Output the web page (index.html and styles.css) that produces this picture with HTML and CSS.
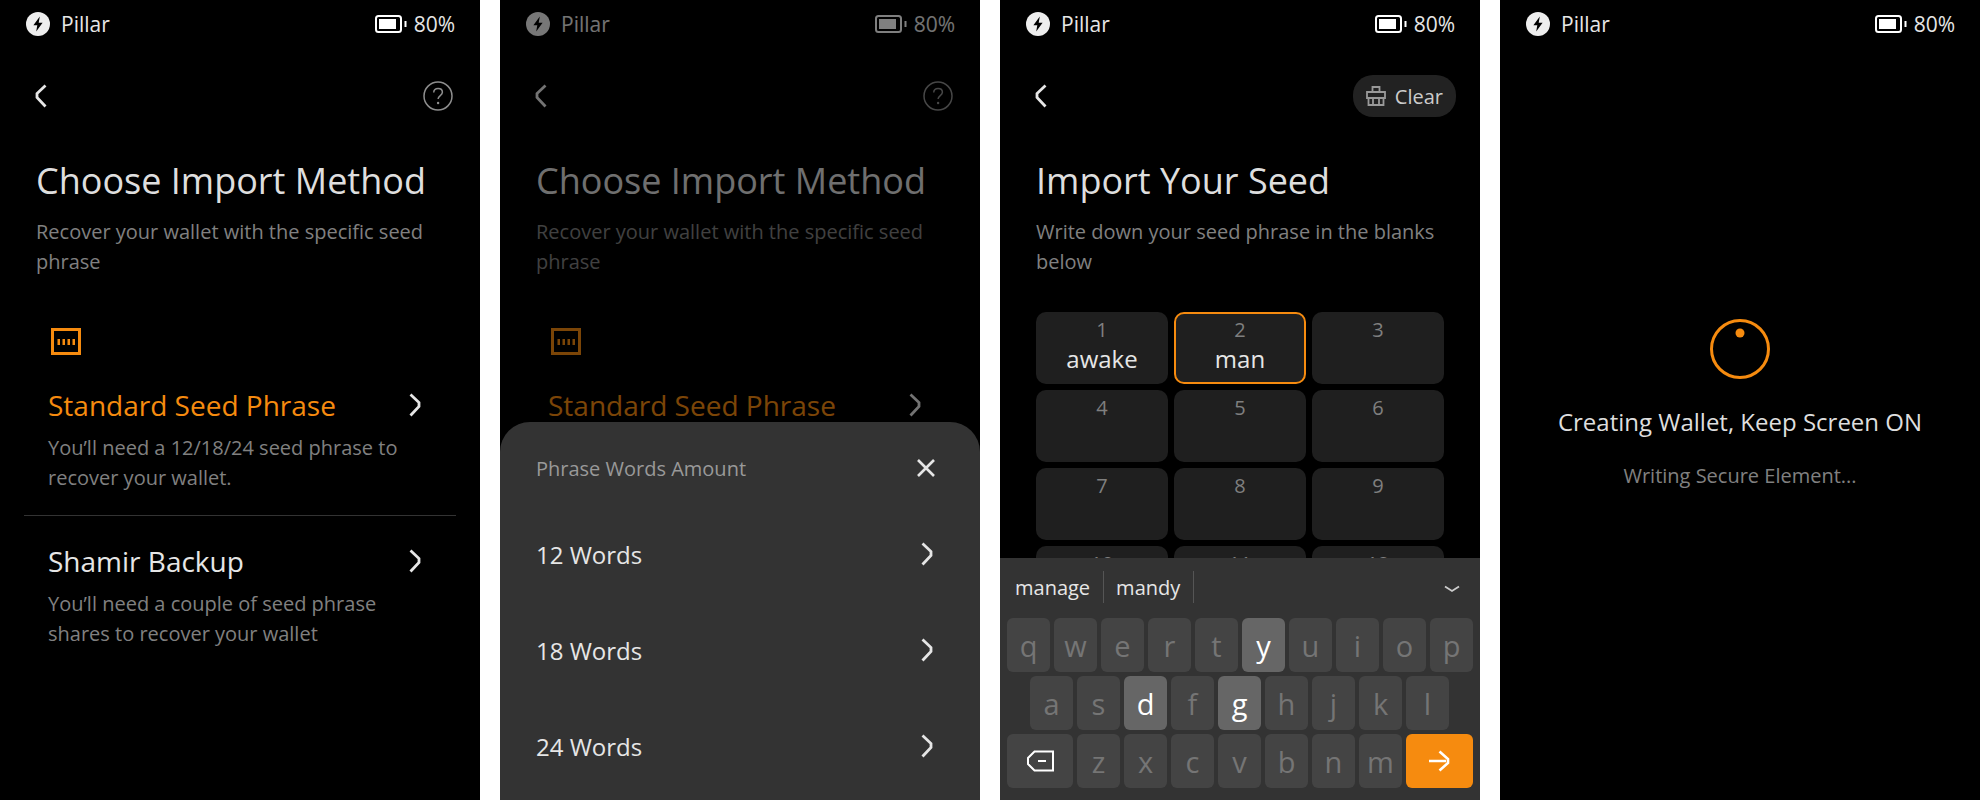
FILE: index.html
```html
<!DOCTYPE html>
<html lang="en">
  <head>
    <meta name="viewport" content="width=device-width, initial-scale=1.0">
    <meta charset="utf-8">
    <title>Pillar wallet import</title>
    <link rel="stylesheet" href="styles.css">
  </head>
  <body>
    <svg class="sprite" width="0" height="0">
      <symbol id="bolt" viewBox="0 0 24 24">
        <circle cx="12" cy="12" r="12" fill="#eee"/>
        <path d="M13.8 4.600 7.400 13.200h3.900l-1.100 6.200 6.400-8.600h-3.900z" fill="#000"/>
      </symbol>
      <symbol id="battery" viewBox="0 0 32 18">
        <rect x="1" y="1" width="25" height="16" rx="2.500" fill="none" stroke="currentColor" stroke-width="2"/>
        <rect x="4" y="4" width="17" height="10" fill="currentColor"/>
        <rect x="29.500" y="6" width="2" height="6" fill="currentColor"/>
      </symbol>
      <symbol id="back" viewBox="0 0 12 24">
        <path d="M10.500 1.500 2 9.500v4l8.500 9" fill="none" stroke="currentColor" stroke-width="2.800"/>
      </symbol>
      <symbol id="next" viewBox="0 0 12 24">
        <path d="M1.500 1.500 10 9.500v4l-8.500 9" fill="none" stroke="currentColor" stroke-width="2.800"/>
      </symbol>
    </svg>

    <main class="page">
      <!-- choose method -->
      <section class="screen">
        <div class="status">
          <div class="status-app"><svg class="logo"><use href="#bolt"/></svg>Pillar</div>
          <div class="status-battery"><svg class="battery"><use href="#battery"/></svg>80%</div>
        </div>
        <div class="nav">
          <svg class="back"><use href="#back"/></svg>
          <svg class="help" viewBox="0 0 30 30">
            <circle cx="15" cy="15" r="14" fill="none" stroke="currentColor" stroke-width="1.500"/>
            <path d="M10.700 11.500c.2-2.500 2-3.900 4.400-3.900 2.500 0 4.300 1.500 4.300 3.700 0 3.300-4.300 3.300-4.300 6.700" fill="none" stroke="currentColor" stroke-width="1.500"/>
            <circle cx="15.100" cy="22" r="1.200" fill="currentColor"/>
          </svg>
        </div>
        <div class="intro">
          <h1 class="title">Choose Import Method</h1>
          <p class="subtitle">Recover your wallet with the specific seed phrase</p>
        </div>
        <div class="methods">
          <div class="method method-first">
            <svg class="seed-icon" viewBox="0 0 30 27">
              <rect x="1.500" y="1.500" width="27" height="24" fill="none" stroke="currentColor" stroke-width="3"/>
              <path d="M6.500 11H9v6H6.500zm5 0H14v6h-2.500zm5 0H19v6h-2.500zm5 0H24v6h-2.500z" fill="currentColor"/>
            </svg>
            <div class="method-head method-active"><span>Standard Seed Phrase</span><svg class="next"><use href="#next"/></svg></div>
            <p class="method-desc">You’ll need a 12/18/24 seed phrase to recover your wallet.</p>
          </div>
          <div class="method">
            <div class="method-head"><span>Shamir Backup</span><svg class="next"><use href="#next"/></svg></div>
            <p class="method-desc">You’ll need a couple of seed phrase shares to recover your wallet</p>
          </div>
        </div>
      </section>

      <!-- words amount sheet -->
      <section class="screen">
        <div class="status">
          <div class="status-app"><svg class="logo"><use href="#bolt"/></svg>Pillar</div>
          <div class="status-battery"><svg class="battery"><use href="#battery"/></svg>80%</div>
        </div>
        <div class="nav">
          <svg class="back"><use href="#back"/></svg>
          <svg class="help" viewBox="0 0 30 30">
            <circle cx="15" cy="15" r="14" fill="none" stroke="currentColor" stroke-width="1.500"/>
            <path d="M10.700 11.500c.2-2.500 2-3.900 4.400-3.900 2.500 0 4.300 1.500 4.300 3.700 0 3.300-4.300 3.300-4.300 6.700" fill="none" stroke="currentColor" stroke-width="1.500"/>
            <circle cx="15.100" cy="22" r="1.200" fill="currentColor"/>
          </svg>
        </div>
        <div class="intro">
          <h1 class="title">Choose Import Method</h1>
          <p class="subtitle">Recover your wallet with the specific seed phrase</p>
        </div>
        <div class="methods">
          <div class="method method-first">
            <svg class="seed-icon" viewBox="0 0 30 27">
              <rect x="1.500" y="1.500" width="27" height="24" fill="none" stroke="currentColor" stroke-width="3"/>
              <path d="M6.500 11H9v6H6.500zm5 0H14v6h-2.500zm5 0H19v6h-2.500zm5 0H24v6h-2.500z" fill="currentColor"/>
            </svg>
            <div class="method-head method-active"><span>Standard Seed Phrase</span><svg class="next"><use href="#next"/></svg></div>
          </div>
        </div>
        <div class="dim"></div>
        <div class="sheet">
          <div class="sheet-head">
            <span>Phrase Words Amount</span>
            <svg class="close" viewBox="0 0 18 18"><path d="M1 1l16 16M17 1 1 17" fill="none" stroke="currentColor" stroke-width="2.600"/></svg>
          </div>
          <div class="sheet-row"><span>12 Words</span><svg class="next"><use href="#next"/></svg></div>
          <div class="sheet-row"><span>18 Words</span><svg class="next"><use href="#next"/></svg></div>
          <div class="sheet-row"><span>24 Words</span><svg class="next"><use href="#next"/></svg></div>
        </div>
      </section>

      <!-- seed entry -->
      <section class="screen">
        <div class="status">
          <div class="status-app"><svg class="logo"><use href="#bolt"/></svg>Pillar</div>
          <div class="status-battery"><svg class="battery"><use href="#battery"/></svg>80%</div>
        </div>
        <div class="nav">
          <svg class="back"><use href="#back"/></svg>
          <div class="clear">
            <svg class="clear-icon" viewBox="0 0 20 20">
              <path d="M1 6h18v6H1zM2.500 12v7h15v-7M6.500 6V1h7v5M7 12v7M13 12v7" fill="none" stroke="currentColor" stroke-width="1.800"/>
            </svg>
            Clear
          </div>
        </div>
        <div class="intro">
          <h1 class="title">Import Your Seed</h1>
          <p class="subtitle">Write down your seed phrase in the blanks below</p>
        </div>
        <div class="words">
          <div class="word"><span class="word-num">1</span><span class="word-text">awake</span></div>
          <div class="word word-active"><span class="word-num">2</span><span class="word-text">man</span></div>
          <div class="word"><span class="word-num">3</span></div>
          <div class="word"><span class="word-num">4</span></div>
          <div class="word"><span class="word-num">5</span></div>
          <div class="word"><span class="word-num">6</span></div>
          <div class="word"><span class="word-num">7</span></div>
          <div class="word"><span class="word-num">8</span></div>
          <div class="word"><span class="word-num">9</span></div>
          <div class="word"><span class="word-num">10</span></div>
          <div class="word"><span class="word-num">11</span></div>
          <div class="word"><span class="word-num">12</span></div>
        </div>
        <div class="keyboard">
          <div class="candidates">
            <span class="candidate">manage</span>
            <span class="candidate">mandy</span>
            <svg class="candidates-more" viewBox="0 0 16 8"><path d="M1 1.500 8 6l7-4.500" fill="none" stroke="currentColor" stroke-width="1.800"/></svg>
          </div>
          <div class="keys">
            <div class="key">q</div><div class="key">w</div><div class="key">e</div><div class="key">r</div><div class="key">t</div><div class="key key-on">y</div><div class="key">u</div><div class="key">i</div><div class="key">o</div><div class="key">p</div>
          </div>
          <div class="keys keys-mid">
            <div class="key">a</div><div class="key">s</div><div class="key key-on">d</div><div class="key">f</div><div class="key key-on">g</div><div class="key">h</div><div class="key">j</div><div class="key">k</div><div class="key">l</div>
          </div>
          <div class="keys">
            <div class="key key-wide">
              <svg class="del-icon" viewBox="0 0 28 22"><path d="M27 1.500v19H8.500L2 14V8l6.500-6.500zM12 11h8" fill="none" stroke="currentColor" stroke-width="2"/></svg>
            </div>
            <div class="key">z</div><div class="key">x</div><div class="key">c</div><div class="key">v</div><div class="key">b</div><div class="key">n</div><div class="key">m</div>
            <div class="key key-wide key-go">
              <svg class="go-icon" viewBox="0 0 21 22"><path d="M0 11h17M10.500 1.500 19 9v4l-8.500 7.500" fill="none" stroke="currentColor" stroke-width="2.600"/></svg>
            </div>
          </div>
        </div>
      </section>

      <!-- creating wallet -->
      <section class="screen">
        <div class="status">
          <div class="status-app"><svg class="logo"><use href="#bolt"/></svg>Pillar</div>
          <div class="status-battery"><svg class="battery"><use href="#battery"/></svg>80%</div>
        </div>
        <div class="progress">
          <svg class="spinner" viewBox="0 0 60 60">
            <circle cx="30" cy="30" r="28.500" fill="none" stroke="currentColor" stroke-width="3"/>
            <circle cx="30" cy="14" r="4.500" fill="currentColor"/>
          </svg>
          <div class="progress-title">Creating Wallet, Keep Screen ON</div>
          <div class="progress-sub">Writing Secure Element...</div>
        </div>
      </section>
    </main>
  </body>
</html>
```

FILE: styles.css
```css
*, *::before, *::after {
  box-sizing: border-box;
}

html, body {
  margin: 0;
  padding: 0;
  background: #fff;
  font-family: "Open Sans", "Noto Sans", sans-serif;
}

h1, p {
  margin: 0;
  padding: 0;
}

.sprite {
  position: absolute;
}

.page {
  display: flex;
  gap: 20px;
  width: 1980px;
  height: 800px;
  overflow: hidden;
}

.screen {
  position: relative;
  flex: 0 0 480px;
  height: 800px;
  background: #000;
  color: #e6e6e6;
  overflow: hidden;
}

/* status bar */
.status {
  display: flex;
  align-items: center;
  justify-content: space-between;
  height: 48px;
  padding: 0 25px 0 26px;
  font-size: 21px;
}

.status-app, .status-battery {
  display: flex;
  align-items: center;
}

.status-app {
  font-weight: 500;
}

.logo {
  width: 24px;
  height: 24px;
  margin-right: 11px;
}

.battery {
  width: 32px;
  height: 18px;
  margin-right: 7px;
  color: #fff;
}

/* nav row */
.nav {
  display: flex;
  align-items: center;
  justify-content: space-between;
  height: 42px;
  margin-top: 27px;
  padding: 0 24px 0 35px;
}

.back {
  width: 12px;
  height: 24px;
  color: #e6e6e6;
}

.help {
  width: 30px;
  height: 30px;
  margin-right: 3px;
  color: #8e8e8e;
}

.clear {
  display: flex;
  align-items: center;
  height: 42px;
  padding: 0 13px;
  border-radius: 20px;
  background: #222;
  color: #ccc;
  font-size: 20px;
}

.clear-icon {
  width: 20px;
  height: 20px;
  margin-right: 9px;
  color: #999;
}

/* heading block */
.intro {
  margin-top: 40px;
  padding: 0 36px;
}

.title {
  font-size: 36px;
  line-height: 48px;
  font-weight: 400;
  color: #dedede;
}

.subtitle {
  margin-top: 12px;
  font-size: 20px;
  line-height: 30px;
  color: #808080;
}

/* method list */
.methods {
  margin: 51px 24px 0;
}

.method {
  padding: 25px 24px 0;
}

.method-first {
  padding-top: 0;
  padding-bottom: 22px;
  border-bottom: 1px solid #333;
}

.seed-icon {
  display: block;
  width: 30px;
  height: 27px;
  margin: 0 0 30px 3px;
  color: #f68b0f;
}

.method-head {
  display: flex;
  align-items: center;
  justify-content: space-between;
  height: 40px;
  padding-right: 11px;
  font-size: 28px;
  color: #e6e6e6;
}

.method-active {
  color: #f68b0f;
}

.next {
  width: 12px;
  height: 24px;
  color: #e6e6e6;
}

.method-desc {
  margin-top: 8px;
  font-size: 20px;
  line-height: 30px;
  color: #808080;
}

/* bottom sheet */
.dim {
  position: absolute;
  inset: 0;
  background: rgba(0, 0, 0, 0.5);
}

.sheet {
  position: absolute;
  left: 0;
  right: 0;
  top: 422px;
  bottom: 0;
  padding: 0 36px;
  border-radius: 30px 30px 0 0;
  background: #333;
}

.sheet-head {
  display: flex;
  align-items: center;
  justify-content: space-between;
  height: 62px;
  padding-top: 30px;
  margin-bottom: 22px;
  font-size: 20px;
  color: #999;
}

.close {
  width: 18px;
  height: 18px;
  margin-right: 9px;
  color: #e6e6e6;
}

.sheet-row {
  display: flex;
  align-items: center;
  justify-content: space-between;
  height: 96px;
  padding-right: 11px;
  font-size: 24px;
  color: #e6e6e6;
}

/* seed words grid */
.words {
  display: grid;
  grid-template-columns: repeat(3, 132px);
  grid-auto-rows: 72px;
  gap: 6px;
  margin: 35px 0 0 36px;
}

.word {
  display: flex;
  flex-direction: column;
  align-items: center;
  padding-top: 6px;
  border-radius: 10px;
  background: #1f1f1f;
}

.word-active {
  border: 2px solid #f68b0f;
  padding-top: 4px;
}

.word-num {
  font-size: 20px;
  line-height: 24px;
  color: #7f7f7f;
}

.word-text {
  margin-top: 3px;
  font-size: 24px;
  line-height: 28px;
  color: #e6e6e6;
}

/* keyboard */
.keyboard {
  position: absolute;
  left: 0;
  right: 0;
  bottom: 0;
  height: 242px;
  background: #333;
}

.candidates {
  display: flex;
  align-items: center;
  height: 58px;
  margin-bottom: 2px;
  padding: 0 20px 0 15px;
}

.candidate {
  display: flex;
  align-items: center;
  height: 32px;
  padding-right: 13px;
  margin-right: 12px;
  border-right: 1px solid #555;
  font-size: 20px;
  color: #e6e6e6;
}

.candidates-more {
  width: 16px;
  height: 8px;
  margin-left: auto;
  margin-top: 4px;
  color: #ccc;
}

.keys {
  display: flex;
  justify-content: center;
  gap: 4px;
  margin-bottom: 4px;
}

.keys-mid {
  margin-right: 1px;
}

.key {
  display: flex;
  align-items: center;
  justify-content: center;
  width: 43px;
  height: 54px;
  border-radius: 6px;
  background: #444;
  color: #757575;
  font-size: 29px;
}

.key-on {
  background: #666;
  color: #fff;
}

.key-wide {
  width: 66px;
}

.key-go {
  width: 67px;
  background: #f68b0f;
  color: #fff;
}

.del-icon {
  width: 28px;
  height: 22px;
  color: #fff;
}

.go-icon {
  width: 21px;
  height: 22px;
}

/* creating wallet */
.progress {
  display: flex;
  flex-direction: column;
  align-items: center;
  padding-top: 271px;
}

.spinner {
  width: 60px;
  height: 60px;
  color: #f68b0f;
}

.progress-title {
  margin-top: 25px;
  font-size: 24px;
  line-height: 36px;
  color: #dedede;
}

.progress-sub {
  margin-top: 21px;
  font-size: 20px;
  line-height: 30px;
  color: #808080;
}
```
